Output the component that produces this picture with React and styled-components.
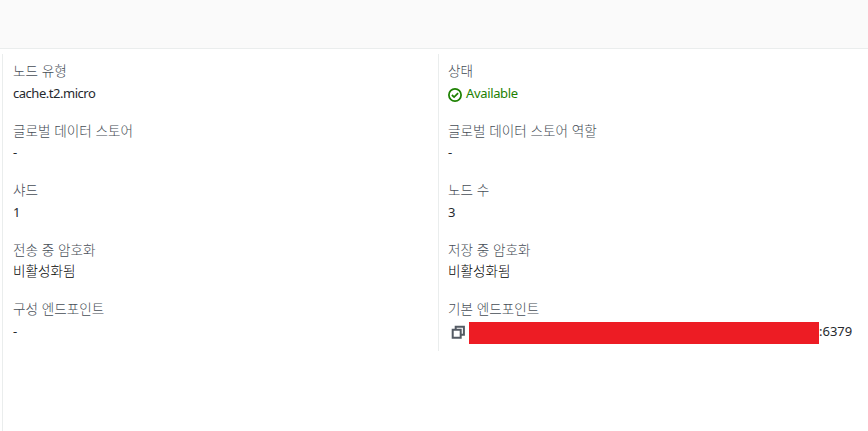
import React from "react";
import styled, { createGlobalStyle } from "styled-components";

const GlobalStyle = createGlobalStyle`
  * { box-sizing: border-box; }
  body {
    margin: 0;
    background: #fff;
    color: #26292e;
    overflow: hidden;
    font: 13px/22px "Noto Sans", "Noto Sans CJK KR", sans-serif;
  }
`;

const Page = styled.main`
  height: 431px;
  display: flex;
  flex-direction: column;
`;

const Header = styled.header`
  height: 49px;
  flex: none;
  background: #fafafa;
  border-bottom: 1px solid #eaeded;
`;

const Panel = styled.section`
  flex: 1;
  margin: 5px 0 0 2px;
  border-left: 1px solid #eaeded;
  display: grid;
  grid-template-columns: 435px 1fr;
  align-items: start;
`;

const Column = styled.dl`
  margin: 0;
  height: 297px;
  padding: 6px 0 0 ${(p) => (p.$divided ? 9 : 10)}px;
  border-left: ${(p) => (p.$divided ? "1px solid #eaeded" : "0")};
`;

const Field = styled.div`
  height: 59.5px;
  white-space: nowrap;
`;

const Label = styled.dt`
  height: 21.9px;
  color: #464d56;
  font-family: "Noto Sans CJK KR", sans-serif;
  font-size: 13.6px;
  font-weight: 300;
  line-height: 20px;
  word-spacing: 0.7px;
`;

const Value = styled.dd`
  margin: 0;
  height: 22px;
  display: flex;
  align-items: center;
  color: ${(p) => (p.$korean ? "#000" : "inherit")};
  font-size: ${(p) => (p.$korean ? 13.6 : 13)}px;
  font-weight: ${(p) => (p.$korean ? 300 : 400)};
  letter-spacing: ${(p) => (p.$tracking || 0)}px;
`;

const Status = styled.span`
  display: flex;
  align-items: center;
  gap: 4px;
  color: #1d8102;
  letter-spacing: -0.35px;

  svg { margin-top: 4px; }
`;

const CopyButton = styled.button`
  width: 21px;
  height: 22px;
  padding: 5px 0 0 3px;
  border: 0;
  background: none;
  display: flex;
`;

const Redaction = styled.span`
  width: 350px;
  height: 22px;
  flex: none;
  margin-top: 4px;
  background: #ed1c24;
`;

const CheckIcon = () => (
  <svg width="14" height="14" viewBox="0 0 14 14" fill="none" stroke="currentColor" strokeWidth="1.75">
    <circle cx="7" cy="7" r="6.1" />
    <path d="M3.9 7l2.2 2.1 4-4" />
  </svg>
);

const CopyIcon = () => (
  <svg width="14" height="14" viewBox="0 0 14 14" fill="none" stroke="#545b64" strokeWidth="2">
    <path d="M1.7 4.7h8v8h-8z" />
    <path d="M4.7 4.7V1.7h8.2v8H9.7" />
  </svg>
);

const primary = [
  { label: "노드 유형", value: "cache.t2.micro", tracking: -0.47 },
  { label: "글로벌 데이터 스토어", value: "-" },
  { label: "샤드", value: "1" },
  { label: "전송 중 암호화", value: "비활성화됨", korean: true },
  { label: "구성 엔드포인트", value: "-" },
];

const secondary = [
  { label: "상태", value: <Status><CheckIcon />Available</Status> },
  { label: "글로벌 데이터 스토어 역할", value: "-" },
  { label: "노드 수", value: "3" },
  { label: "저장 중 암호화", value: "비활성화됨", korean: true },
  {
    label: "기본 엔드포인트",
    value: <><CopyButton aria-label="복사"><CopyIcon /></CopyButton><Redaction />:6379</>,
  },
];

const Details = ({ fields, divided }) => (
  <Column $divided={divided}>
    {fields.map((f) => (
      <Field key={f.label}>
        <Label>{f.label}</Label>
        <Value $korean={f.korean} $tracking={f.tracking}>{f.value}</Value>
      </Field>
    ))}
  </Column>
);

export default function App() {
  return (
    <Page>
      <GlobalStyle />
      <Header />
      <Panel>
        <Details fields={primary} />
        <Details fields={secondary} divided />
      </Panel>
    </Page>
  );
}
